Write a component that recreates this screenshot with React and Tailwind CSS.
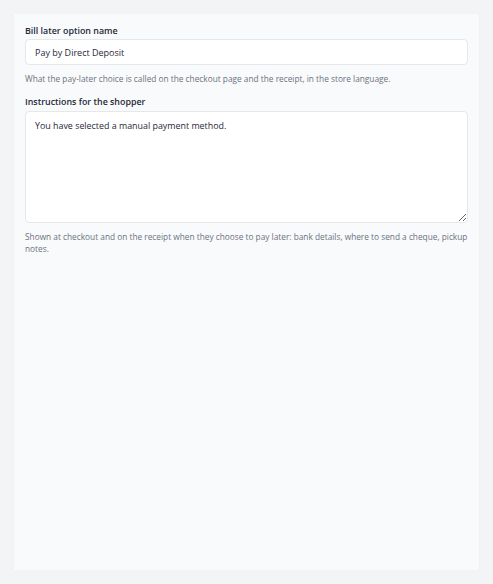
export default function App() {
  return (
    <div className="min-h-screen bg-[#f3f4f6] p-[14px]" style={{ fontFamily: '"Open Sans", "Noto Sans", sans-serif' }}>
      <div className="min-h-[556px] bg-[#f9fafb] px-[11px] pt-[10px] pb-4 shadow-[0_0_1px_rgba(0,0,0,0.06)]">
        {/* Option name */}
        <label className="block text-[8.9px] leading-[13px] font-semibold text-[#1f2937] mb-[2px]">
          Bill later option name
        </label>
        <input
          type="text"
          defaultValue="Pay by Direct Deposit"
          className="block w-full h-[26px] rounded-[4px] border border-[#e5e7eb] bg-white px-[9px] text-[9px] text-[#1f2937] outline-none"
        />
        <p className="mt-[8px] text-[8.3px] leading-[12px] text-[#6b7280]">
          What the pay-later choice is called on the checkout page and the receipt, in the store language.
        </p>

        {/* Instructions */}
        <label className="block mt-[10px] text-[8.9px] leading-[13px] font-semibold text-[#1f2937] mb-[3px]">
          Instructions for the shopper
        </label>
        <textarea
          defaultValue="You have selected a manual payment method."
          className="block w-full h-[112px] rounded-[4px] border border-[#e5e7eb] bg-white px-[9px] py-[7px] text-[8.9px] leading-[13px] text-[#1f2937] outline-none"
        />
        <p className="mt-[8px] text-[8.3px] leading-[12px] text-[#6b7280]">
          Shown at checkout and on the receipt when they choose to pay later: bank details, where to send a cheque, pickup notes.
        </p>
      </div>
    </div>
  )
}
